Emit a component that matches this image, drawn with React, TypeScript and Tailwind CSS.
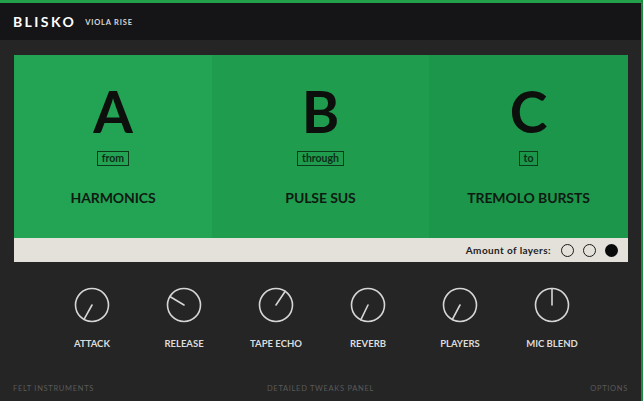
const font = { fontFamily: "Lato, 'DejaVu Sans', sans-serif" };

const layers = [
  { letter: "A", word: "from", name: "HARMONICS", bg: "bg-[#23a455]" },
  { letter: "B", word: "through", name: "PULSE SUS", bg: "bg-[#1f9c4e]" },
  { letter: "C", word: "to", name: "TREMOLO BURSTS", bg: "bg-[#1c964a]" },
];

const knobs = [
  { label: "ATTACK", angle: 209 },
  { label: "RELEASE", angle: -59 },
  { label: "TAPE ECHO", angle: 34 },
  { label: "REVERB", angle: 206 },
  { label: "PLAYERS", angle: 208 },
  { label: "MIC BLEND", angle: 0 },
];

function Knob({ angle }: { angle: number }) {
  const r = 16.5;
  const a = (angle * Math.PI) / 180;
  const x2 = 18 + Math.sin(a) * r;
  const y2 = 18 - Math.cos(a) * r;
  return (
    <svg width="36" height="36" viewBox="0 0 36 36">
      <circle cx="18" cy="18" r={r} fill="none" stroke="#d6d6d6" strokeWidth="1.6" />
      <line x1="18" y1="18" x2={x2} y2={y2} stroke="#d6d6d6" strokeWidth="1.6" strokeLinecap="round" />
    </svg>
  );
}

export default function App() {
  return (
    <div className="w-[643px] h-[401px] bg-[#252525] flex flex-col overflow-hidden border-r-2 border-[#1c8f3f]" style={font}>
      <div className="h-[3px] bg-[#22a04a]" />
      <div className="h-[37px] bg-[#151517] flex items-center px-[13px] gap-[9px]">
        <span className="text-white text-[14px] font-bold tracking-[2.4px] leading-none">BLISKO</span>
        <span className="text-[#d8d8d8] text-[7.5px] font-bold tracking-[0.8px] leading-none mt-[3px]">VIOLA RISE</span>
      </div>

      <div className="mx-[14px] mt-[15px] w-[614px] flex flex-col">
        <div className="grid grid-cols-[198px_217px_199px] h-[183px]">
          {layers.map((l) => (
            <div key={l.letter} className={`${l.bg} flex flex-col items-center pt-[28px]`}>
              <div className="text-[57px] font-bold leading-none text-[#0d0f0d]">{l.letter}</div>
              <div className="mt-[11px] h-[15px] px-[4px] border border-[#0c3a1b] flex items-center text-[10.5px] font-bold text-[#0c2e16] leading-none">
                {l.word}
              </div>
              <div className="mt-[25px] text-[14px] font-bold leading-none text-[#0f1a12] tracking-[-0.1px]">{l.name}</div>
            </div>
          ))}
        </div>
        <div className="h-[24px] bg-[#e4e1da] flex items-center justify-end pr-[10px]">
          <span className="text-[10px] font-bold text-[#222] tracking-[0.4px] mr-[10px]">Amount of layers:</span>
          <div className="flex gap-[9px]">
            <span className="w-[13px] h-[13px] rounded-full border-[1.5px] border-[#1a1a1a]" />
            <span className="w-[13px] h-[13px] rounded-full border-[1.5px] border-[#1a1a1a]" />
            <span className="w-[13px] h-[13px] rounded-full bg-[#0a0a0a]" />
          </div>
        </div>
      </div>

      <div className="flex pl-[46px] mt-[25px]">
        {knobs.map((k) => (
          <div key={k.label} className="w-[92px] flex flex-col items-center">
            <Knob angle={k.angle} />
            <span className="mt-[16px] text-[9.5px] font-bold text-[#dcdcdc] leading-none">{k.label}</span>
          </div>
        ))}
      </div>

      <div className="mt-auto h-[24px] grid grid-cols-3 items-center px-[13px] text-[7.5px] tracking-[0.7px] text-[#5a5a5a] leading-none">
        <span>FELT INSTRUMENTS</span>
        <span className="text-center">DETAILED TWEAKS PANEL</span>
        <span className="text-right">OPTIONS</span>
      </div>
    </div>
  );
}
